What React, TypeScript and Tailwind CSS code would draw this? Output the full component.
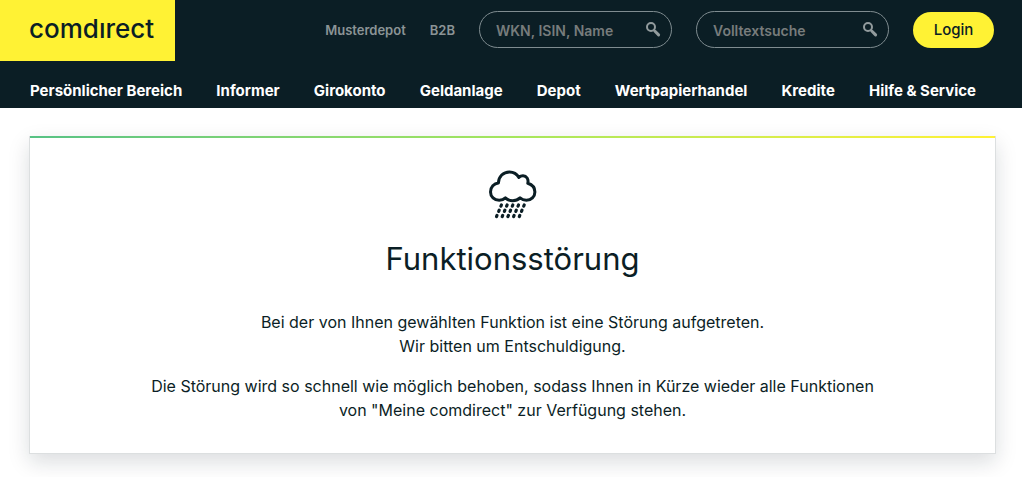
import React from 'react';

const navItems = [
    'Persönlicher Bereich',
    'Informer',
    'Girokonto',
    'Geldanlage',
    'Depot',
    'Wertpapierhandel',
    'Kredite',
    'Hilfe & Service',
];

interface SearchFieldProps {
    id: string;
    placeholder: string;
}

const SearchField: React.FC<SearchFieldProps> = ({ id, placeholder }) => (
    <div className="flex h-[37px] w-[193px] items-center rounded-full border border-[#7f8c90] pr-2.5 pl-4">
        <input
            id={id}
            type="text"
            aria-label={placeholder}
            placeholder={placeholder}
            className="min-w-0 grow bg-transparent pt-0.5 text-sm font-semibold text-white outline-none placeholder:text-[#777c7c]"
        />
        <button type="button" aria-label="Suchen" className="shrink-0">
            <svg width="16" height="16" viewBox="0 0 16 16" fill="none" stroke="#929b9d" className="block">
                <circle cx="6" cy="5" r="4" strokeWidth="2" />
                <path d="M8.6 7.8 10 9.2" strokeWidth="2" />
                <path d="M10 9.3 13.6 12.9" strokeWidth="3" strokeLinecap="round" />
            </svg>
        </button>
    </div>
);

// Each row holds five slanted drops and starts a little further left
const rainRows = [
    { x: 12.4, y: 35 },
    { x: 10.2, y: 40.2 },
    { x: 8, y: 45.4 },
];

const RainCloud: React.FC = () => (
    <svg width="48" height="50" viewBox="0 0 48 50" fill="none" stroke="#0b1e25" aria-hidden="true">
        <path
            d="M16.4 27.8C14.6 29.5 12.6 30.2 10.2 30.2C5.3 30.2 1.5 26.6 1.5 21.9C1.5 17.2 5 13.4 9.4 12.9C9.6 6.6 14.3 1.9 20.4 1.9C24.6 1.9 28 4 29.9 7.4C31.2 6.2 32.6 5.8 34 5.8C37.6 5.8 39.8 9.2 38.8 13.3C43 14.6 45.9 17.8 45.9 21.9C45.9 26.6 42.2 30.2 37.4 30.2C34.8 30.2 32.7 29.5 31 27.8C29 29.7 26.4 30.7 23.7 30.7C21 30.7 18.4 29.7 16.4 27.8Z"
            strokeWidth="3"
            strokeLinejoin="round"
        />
        {rainRows.map((row) => (
            [0, 1, 2, 3, 4].map((drop) => (
                <path
                    key={`${row.y}-${drop}`}
                    d={`M${row.x + drop * 5.7} ${row.y} l-0.5 1.2`}
                    strokeWidth="3.2"
                    strokeLinecap="round"
                />
            ))
        ))}
    </svg>
);

const Header: React.FC = () => (
    <header className="bg-[#0b1e25] font-['Inter',sans-serif]">
        <div className="flex items-start justify-between pr-7">
            <a href="#" className="flex h-[61px] w-[175px] items-center bg-[#fff234] pb-1 pl-[29px] text-[26px] leading-8 font-medium text-[#0b1e25]">
                comdırect
            </a>
            <div className="flex items-center gap-6 pt-[11px]">
                <a href="#" className="pt-0.5 text-[13px] font-semibold text-[#8b9496]">Musterdepot</a>
                <a href="#" className="pt-0.5 text-[13px] font-semibold text-[#8b9496]">B2B</a>
                <SearchField id="wkn" placeholder="WKN, ISIN, Name" />
                <SearchField id="volltext" placeholder="Volltextsuche" />
                <button type="button" className="h-9 w-[81px] rounded-full bg-[#fff234] pt-0.5 text-[15px] font-medium text-[#0b1e25]">
                    Login
                </button>
            </div>
        </div>
        <nav className="flex justify-between pt-[18px] pr-[46px] pb-[5px] pl-[30px]">
            {navItems.map((item) => (
                <a key={item} href="#" className="text-[15px] leading-6 font-bold whitespace-nowrap text-white">{item}</a>
            ))}
        </nav>
    </header>
);

const App: React.FC = () => {
    return (
        <div className="bg-white text-[#0b1e25]">
            <Header />
            <main className="pt-7 pr-[26px] pb-[23px] pl-[29px] font-['Inter',sans-serif]">
                <section className="border-x border-b border-[#dcdfe0] bg-white text-center shadow-[0_8px_20px_rgba(11,30,37,0.15)]">
                    <div className="h-0.5 bg-linear-to-r from-[#57c284] via-[#a5e65c] to-[#fff234]"></div>
                    <div className="px-6 pt-8 pb-[31px]">
                        <div className="flex justify-center">
                            <RainCloud />
                        </div>
                        <h1 className="mt-[19px] text-[31px] leading-10">Funktionsstörung</h1>
                        <p className="mt-[31px] text-base leading-6">
                            Bei der von Ihnen gewählten Funktion ist eine Störung aufgetreten.
                            <br />
                            Wir bitten um Entschuldigung.
                        </p>
                        <p className="mt-4 text-base leading-6">
                            Die Störung wird so schnell wie möglich behoben, sodass Ihnen in Kürze wieder alle Funktionen
                            <br />
                            von "Meine comdirect" zur Verfügung stehen.
                        </p>
                    </div>
                </section>
            </main>
        </div>
    );
};

export default App;
